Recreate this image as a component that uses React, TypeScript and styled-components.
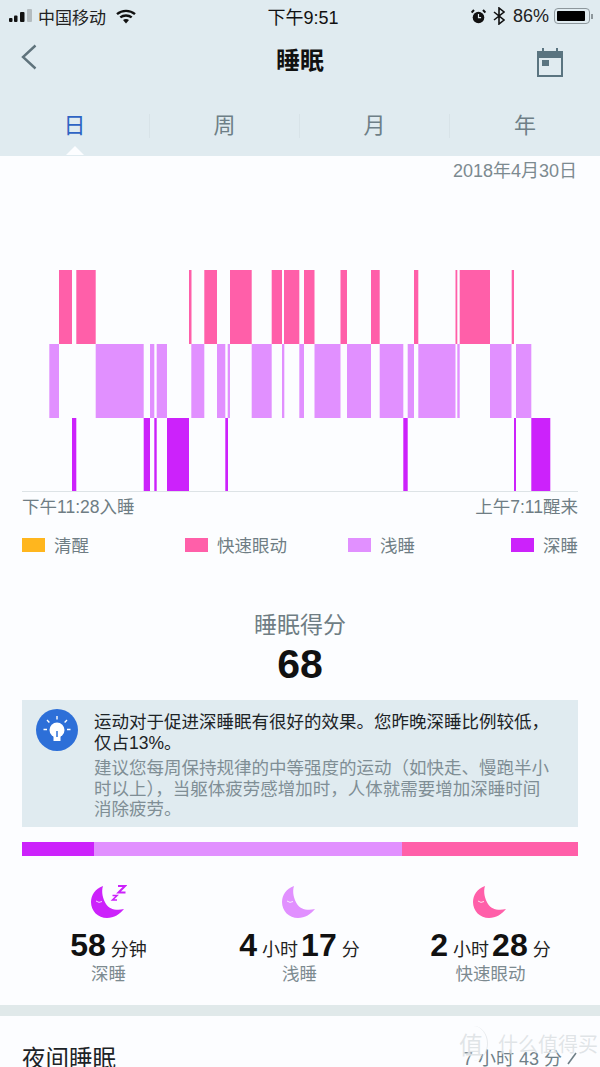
import styled, { createGlobalStyle } from "styled-components";

const REM = "#ff5fa9";
const LIGHT = "#e190ff";
const DEEP = "#cc22fb";
const AWAKE = "#ffb61e";

const CHART_LEFT = 22;
const ROW_H = 74;

// full-width punctuation written as escapes so it stays CJK width
const TIP_LEAD = "运动对于促进深睡眠有很好的效果。您昨晚深睡比例较低\uFF0C仅占13%。";
const TIP_BODY =
  "建议您每周保持规律的中等强度的运动\uFF08如快走、慢跑半小时以上\uFF09\uFF0C当躯体疲劳感增加时\uFF0C人体就需要增加深睡时间消除疲劳。";

// [start, end] in page x
const remBars = [
  [59, 72], [76.3, 95.7], [189, 191.5], [204.3, 217], [230, 251.7], [271.7, 282],
  [284, 299.3], [304, 314.5], [340.5, 347], [371, 379.7], [414, 418.3], [455.5, 457.3],
  [459.7, 490], [511.7, 514],
];
const lightBars = [
  [49.3, 59], [95.7, 143.7], [150, 154.3], [156.7, 167], [191.3, 204.3], [217, 225.3],
  [227.7, 230], [251.7, 271.7], [282, 284.3], [299.3, 304], [314.5, 340.5], [347, 371],
  [379.7, 403.3], [407.7, 414], [418.3, 455.5], [457.3, 459.7], [490, 511.5], [516, 531.3],
];
const deepBars = [
  [72, 76.3], [143.7, 150], [154.3, 156.7], [167, 189], [225.3, 228], [403.3, 407.7],
  [514, 516], [531.3, 550.3],
];

const legend = [
  { label: "清醒", color: AWAKE },
  { label: "快速眼动", color: REM },
  { label: "浅睡", color: LIGHT },
  { label: "深睡", color: DEEP },
];

const GlobalStyle = createGlobalStyle`
  html, body {
    margin: 0;
    padding: 0;
    background: #fcfdff;
  }
  body {
    font-family: "Liberation Sans", "Noto Sans CJK SC", sans-serif;
  }
`;

const Moon = ({ color, zzz }: { color: string; zzz?: boolean }) => (
  <MoonIcon viewBox="0 0 36 34">
    <path
      d="M12 1C4 4 0 10 0 17C0 26 7 33 16 33C23 33 29 29 33 24C25 26 18 24 15 19C12 14 10 7 12 1Z"
      fill={color}
    />
    <path d="M5 16q3 2.5 6 .5" fill="none" stroke="#fff" strokeWidth="1" opacity="0.8" />
    {zzz && (
      <g fill="none" stroke={color} strokeWidth="2">
        <polyline points="27,1 34,1 27.5,7.5 34.5,7.5" />
        <polyline points="21.5,10.5 26,10.5 21.5,15 26,15" strokeWidth="1.6" />
      </g>
    )}
  </MoonIcon>
);

export default function App() {
  return (
    <Page>
      <GlobalStyle />
      <Header>
        <StatusBar>
          <StatusLeft>
            <svg width="24" height="14" viewBox="0 0 24 14">
              <rect x="0" y="9" width="3.5" height="4" rx="1" fill="#111" />
              <rect x="5" y="6.5" width="3.5" height="6.5" rx="1" fill="#111" />
              <rect x="11" y="3" width="4.5" height="10" rx="1" fill="#111" />
              <rect x="18" y="0" width="5" height="13" rx="1" fill="#b4bcc0" />
            </svg>
            <Carrier>中国移动</Carrier>
            <svg width="20" height="15" viewBox="0 0 20 15">
              <g fill="none" stroke="#111" strokeWidth="2.4">
                <path d="M1 5.2C6 .8 14 .8 19 5.2" />
                <path d="M4.3 8.4C7.5 5.8 12.5 5.8 15.7 8.4" />
              </g>
              <path d="M7 11C8.8 9.8 11.2 9.8 13 11L10 14.5Z" fill="#111" />
            </svg>
          </StatusLeft>
          <Clock>下午9:51</Clock>
          <StatusRight>
            <AlarmIcon width="15" height="15" viewBox="0 0 15 15">
              <circle cx="7.5" cy="8.5" r="5.8" fill="#111" />
              <path d="M7.5 5v3.6h2.6" fill="none" stroke="#e0ebf0" strokeWidth="1.2" />
              <path d="M.6 3.6 3 1M14.4 3.6 12 1" stroke="#111" strokeWidth="2" />
            </AlarmIcon>
            <svg width="12" height="18" viewBox="0 0 12 18">
              <path d="M1 5l10 8-5 4V1l5 4L1 13" fill="none" stroke="#111" strokeWidth="1.6" />
            </svg>
            <Battery>86%</Battery>
            <BatteryShell>
              <BatteryFill />
            </BatteryShell>
            <BatteryTip />
          </StatusRight>
        </StatusBar>

        <NavBar>
          <BackIcon width="16" height="26" viewBox="0 0 16 26">
            <polyline points="14.5,1.5 2,13 14.5,24.5" fill="none" stroke="#5f737c" strokeWidth="2.4" />
          </BackIcon>
          <Title>睡眠</Title>
          <CalendarIcon width="28" height="30" viewBox="0 0 28 30">
            <rect x="2" y="5" width="24" height="24" fill="none" stroke="#5a7480" strokeWidth="2" />
            <rect x="2" y="5" width="24" height="6" fill="#5a7480" />
            <path d="M7 1v5M21 1v5" stroke="#5a7480" strokeWidth="2" />
            <rect x="6" y="13" width="7" height="6" fill="#5a7480" />
          </CalendarIcon>
        </NavBar>

        <Tabs>
          <Tab $active>日</Tab>
          <Tab>周</Tab>
          <Tab>月</Tab>
          <Tab>年</Tab>
        </Tabs>
      </Header>

      <DateRow>2018年4月30日</DateRow>

      <Chart viewBox="0 0 556 222">
        {remBars.map(([a, b]) => (
          <rect key={a} x={a - CHART_LEFT} y={0} width={b - a} height={ROW_H} fill={REM} />
        ))}
        {lightBars.map(([a, b]) => (
          <rect key={a} x={a - CHART_LEFT} y={ROW_H} width={b - a} height={ROW_H} fill={LIGHT} />
        ))}
        {deepBars.map(([a, b]) => (
          <rect key={a} x={a - CHART_LEFT} y={ROW_H * 2} width={b - a} height={ROW_H} fill={DEEP} />
        ))}
        <rect x="0" y="221" width="556" height="1" fill="#dde3e6" />
      </Chart>

      <TimeRow>
        <span>下午11:28入睡</span>
        <span>上午7:11醒来</span>
      </TimeRow>

      <Legend>
        {legend.map((item) => (
          <LegendItem key={item.label}>
            <Swatch $color={item.color} />
            {item.label}
          </LegendItem>
        ))}
      </Legend>

      <ScoreLabel>睡眠得分</ScoreLabel>
      <Score>68</Score>

      <Tip>
        <TipIcon>
          <svg width="42" height="42" viewBox="0 0 42 42">
            <circle cx="21" cy="21" r="21" fill="#2d6fd8" />
            <circle cx="21" cy="21" r="7.5" fill="#fff" />
            <rect x="17.5" y="26" width="7" height="6" fill="#fff" />
            <path d="M21 22v6" stroke="#2d6fd8" strokeWidth="1.5" />
            <path
              d="M21 7v3.5M11 11l2.4 2.4M31 11l-2.4 2.4M7.5 20.5h3.5M31 20.5h3.5"
              stroke="#fff"
              strokeWidth="1.4"
              fill="none"
            />
          </svg>
        </TipIcon>
        <TipText>
          <TipLead>{TIP_LEAD}</TipLead>
          <TipBody>{TIP_BODY}</TipBody>
        </TipText>
      </Tip>

      <StackBar>
        <StackPart $color={DEEP} $share={71.8} />
        <StackPart $color={LIGHT} $share={308.2} />
        <StackPart $color={REM} $share={176} />
      </StackBar>

      <Stats>
        <Stat>
          <Moon color={DEEP} zzz />
          <StatValue>
            58<Unit>分钟</Unit>
          </StatValue>
          <StatLabel>深睡</StatLabel>
        </Stat>
        <Stat>
          <Moon color={LIGHT} />
          <StatValue>
            4<Unit>小时</Unit>17<Unit>分</Unit>
          </StatValue>
          <StatLabel>浅睡</StatLabel>
        </Stat>
        <Stat>
          <Moon color={REM} />
          <StatValue>
            2<Unit>小时</Unit>28<Unit>分</Unit>
          </StatValue>
          <StatLabel>快速眼动</StatLabel>
        </Stat>
      </Stats>

      <Divider />

      <NightRow>
        <NightTitle>夜间睡眠</NightTitle>
        <NightValue>
          7 小时 43 分
          <svg width="12" height="18" viewBox="0 0 12 18">
            <polyline points="2,16 10,5" fill="none" stroke="#6f7f87" strokeWidth="1.6" />
          </svg>
        </NightValue>
      </NightRow>

      <Watermark>
        <WatermarkBadge>值</WatermarkBadge>什么值得买
      </Watermark>
    </Page>
  );
}

const Page = styled.div`
  position: relative;
  width: 600px;
  height: 1067px;
  overflow: hidden;
  background: #fcfdff;
  color: #111;
`;

const Header = styled.header`
  height: 156px;
  background: #e0ebf0;
  display: flex;
  flex-direction: column;
`;

const StatusBar = styled.div`
  height: 32px;
  padding: 0 7px 0 9px;
  display: grid;
  grid-template-columns: 1fr auto 1fr;
  align-items: center;
  font-size: 17px;
`;

const StatusLeft = styled.div`
  display: flex;
  align-items: center;
`;

const Carrier = styled.span`
  margin: 0 10px 0 5px;
  color: #222;
`;

const Clock = styled.span`
  margin-left: 4px;
  font-size: 18px;
`;

const StatusRight = styled.div`
  display: flex;
  align-items: center;
  justify-content: flex-end;
`;

const AlarmIcon = styled.svg`
  margin-right: 7px;
`;

const Battery = styled.span`
  margin: 0 5px 0 8px;
  font-size: 18px;
  color: #222;
`;

const BatteryShell = styled.div`
  box-sizing: border-box;
  width: 36px;
  height: 16px;
  padding: 2px;
  border: 1px solid #8d979c;
  border-radius: 4px;
`;

const BatteryFill = styled.div`
  width: 28px;
  height: 100%;
  background: #000;
  border-radius: 1px;
`;

const BatteryTip = styled.div`
  width: 2px;
  height: 5px;
  margin-left: 1px;
  background: #8d979c;
`;

const NavBar = styled.div`
  height: 52px;
  padding: 0 36px;
  display: grid;
  grid-template-columns: 1fr auto 1fr;
  align-items: center;
`;

const BackIcon = styled.svg`
  margin: 0 0 3px -15px;
`;

const CalendarIcon = styled.svg`
  justify-self: end;
  margin-top: 8px;
`;

const Title = styled.h1`
  margin: 6px 0 0;
  font-size: 24px;
  line-height: 30px;
  font-weight: 700;
`;

const Tabs = styled.nav`
  flex: 1;
  display: grid;
  grid-template-columns: repeat(4, 1fr);
  align-items: center;
  padding-top: 12px;
`;

const Tab = styled.div<{ $active?: boolean }>`
  position: relative;
  height: 24px;
  line-height: 24px;
  text-align: center;
  font-size: 22px;
  color: ${({ $active }) => ($active ? "#2f64c4" : "#6e7f87")};
  border-right: 1px solid #d8e3e8;

  &:last-child {
    border-right: none;
  }

  &::after {
    content: "";
    display: ${({ $active }) => ($active ? "block" : "none")};
    position: absolute;
    left: 50%;
    bottom: -17px;
    margin-left: -9px;
    border: 9px solid transparent;
    border-top: none;
    border-bottom-color: #fcfdff;
  }
`;

const DateRow = styled.div`
  height: 30px;
  padding-right: 23px;
  line-height: 31px;
  text-align: right;
  font-size: 18px;
  color: #7c8a90;
`;

const Chart = styled.svg`
  display: block;
  width: 556px;
  height: 222px;
  margin: 84px 0 0 22px;
`;

const TimeRow = styled.div`
  height: 26px;
  padding: 0 22px;
  display: flex;
  justify-content: space-between;
  align-items: center;
  font-size: 17.5px;
  color: #6f7d84;
`;

const Legend = styled.div`
  height: 20px;
  margin-top: 14px;
  padding: 0 22px;
  display: grid;
  grid-template-columns: repeat(3, 163px) auto;
  align-items: center;
`;

const LegendItem = styled.div`
  display: flex;
  align-items: center;
  gap: 9px;
  font-size: 17.5px;
  color: #6f7d84;
`;

const Swatch = styled.i<{ $color: string }>`
  display: block;
  width: 23px;
  height: 14px;
  background: ${({ $color }) => $color};
`;

const ScoreLabel = styled.div`
  margin-top: 58px;
  height: 30px;
  line-height: 30px;
  text-align: center;
  font-size: 23px;
  color: #6f7d84;
`;

const Score = styled.div`
  height: 44px;
  margin-top: 2px;
  line-height: 44px;
  text-align: center;
  font-size: 41px;
  font-weight: 700;
`;

const Tip = styled.section`
  box-sizing: border-box;
  height: 127px;
  margin: 14px 22px 0;
  padding: 0 26px 0 14px;
  background: #e0ebf0;
  display: flex;
  gap: 16px;
`;

const TipIcon = styled.div`
  flex: none;
  width: 42px;
  height: 42px;
  margin-top: 9px;

  svg {
    display: block;
  }
`;

const TipText = styled.div`
  flex: 1;
  padding-top: 12px;
  font-size: 17.5px;
  line-height: 20.5px;
`;

const TipLead = styled.p`
  margin: 0 0 5px;
  color: #1c2326;
`;

const TipBody = styled.p`
  margin: 0;
  color: #7f8e95;
`;

const StackBar = styled.div`
  height: 14px;
  margin: 15px 22px 0;
  display: flex;
`;

const StackPart = styled.div<{ $color: string; $share: number }>`
  flex: ${({ $share }) => $share} 0 0;
  background: ${({ $color }) => $color};
`;

const Stats = styled.div`
  margin: 29px 0 0 13px;
  width: 573px;
  display: grid;
  grid-template-columns: repeat(3, 1fr);
`;

const Stat = styled.div`
  display: flex;
  flex-direction: column;
  align-items: center;
`;

const MoonIcon = styled.svg`
  display: block;
  width: 36px;
  height: 34px;
`;

const StatValue = styled.div`
  height: 35px;
  margin-top: 8px;
  line-height: 36px;
  font-size: 32px;
  font-weight: 700;
  white-space: nowrap;
`;

const Unit = styled.span`
  margin: 0 3px 0 5px;
  font-size: 18px;
  font-weight: 400;
  color: #222;

  &:last-child {
    margin-right: 0;
  }
`;

const StatLabel = styled.div`
  height: 24px;
  line-height: 24px;
  font-size: 17.5px;
  color: #7c8a90;
`;

const Divider = styled.div`
  height: 11px;
  margin-top: 19px;
  background: #e0e9ea;
`;

const NightRow = styled.div`
  margin-top: 27px;
  padding: 0 22px;
  display: flex;
  justify-content: space-between;
  align-items: center;
  height: 28px;
`;

const NightTitle = styled.div`
  font-size: 23.5px;
  color: #1c2326;
`;

const NightValue = styled.div`
  display: flex;
  align-items: center;
  gap: 4px;
  font-size: 18px;
  color: #6f7f87;
`;

const Watermark = styled.div`
  position: absolute;
  right: 2px;
  bottom: 6px;
  display: flex;
  align-items: center;
  font-size: 20px;
  color: rgba(215, 220, 224, 0.75);
  text-shadow: 0 0 2px #fff;
`;

const WatermarkBadge = styled.span`
  margin-right: 10px;
  padding-right: 4px;
  border-right: 1px solid rgba(215, 220, 224, 0.6);
  border-radius: 50%;
  font-size: 24px;
`;
